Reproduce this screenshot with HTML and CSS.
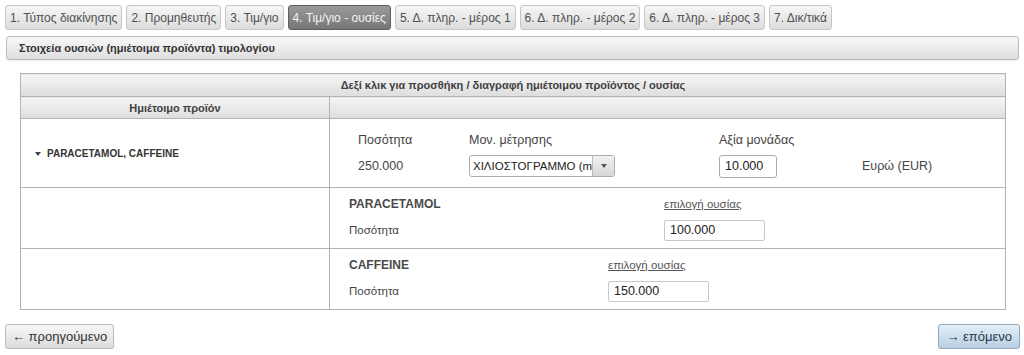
FILE: index.html
```html
<!DOCTYPE html>
<html lang="el">
<head>
<meta charset="utf-8">
<title>Τιμ/γιο - ουσίες</title>
<link rel="stylesheet" href="styles.css">
</head>
<body>
<div class="page">
  <nav class="tabs">
    <span class="tab">1. Τύπος διακίνησης</span>
    <span class="tab">2. Προμηθευτής</span>
    <span class="tab">3. Τιμ/γιο</span>
    <span class="tab active">4. Τιμ/γιο - ουσίες</span>
    <span class="tab">5. Δ. πληρ. - μέρος 1</span>
    <span class="tab">6. Δ. πληρ. - μέρος 2</span>
    <span class="tab">6. Δ. πληρ. - μέρος 3</span>
    <span class="tab">7. Δικ/τικά</span>
  </nav>
  <div class="section-bar">Στοιχεία ουσιών (ημιέτοιμα προϊόντα) τιμολογίου</div>

  <div class="table-wrap">
    <table class="grid">
      <thead>
        <tr class="head1"><th colspan="2">Δεξί κλικ για προσθήκη / διαγραφή ημιέτοιμου προϊόντος / ουσίας</th></tr>
        <tr class="head2"><th class="col-left">Ημιέτοιμο προϊόν</th><th></th></tr>
      </thead>
      <tbody>
        <tr class="row-product">
          <td class="product-name"><span class="caret"></span>PARACETAMOL, CAFFEINE</td>
          <td>
            <div class="product-form">
              <span class="lbl">Ποσότητα</span>
              <span class="lbl">Μον. μέτρησης</span>
              <span class="lbl">Αξία μονάδας</span>
              <span></span>
              <span class="val">250.000</span>
              <div class="select"><span class="select-text">ΧΙΛΙΟΣΤΟΓΡΑΜΜΟ (mg)</span><span class="select-btn"><span class="tri"></span></span></div>
              <div><span class="input small">10.000</span></div>
              <span class="val">Ευρώ (EUR)</span>
            </div>
          </td>
        </tr>
        <tr class="row-sub">
          <td></td>
          <td>
            <div class="sub-form sub-a">
              <span class="sub-name">PARACETAMOL</span>
              <a class="link" href="#">επιλογή ουσίας</a>
              <span class="sub-lbl">Ποσότητα</span>
              <span class="input">100.000</span>
            </div>
          </td>
        </tr>
        <tr class="row-sub">
          <td></td>
          <td>
            <div class="sub-form sub-b">
              <span class="sub-name">CAFFEINE</span>
              <a class="link" href="#">επιλογή ουσίας</a>
              <span class="sub-lbl">Ποσότητα</span>
              <span class="input">150.000</span>
            </div>
          </td>
        </tr>
      </tbody>
    </table>
  </div>

  <div class="footer">
    <span class="btn">← προηγούμενο</span>
    <span class="btn primary">→ επόμενο</span>
  </div>
</div>
</body>
</html>
```

FILE: styles.css
```css
* { box-sizing: border-box; }
html, body { margin: 0; padding: 0; background: #fff; }
body {
  font-family: "Liberation Sans", Arial, sans-serif;
  font-size: 12px;
  color: #333;
}
.page { padding: 5px 5px 0 5px; width: 1024px; }

.tabs { display: flex; gap: 4px; height: 25px; }
.tab {
  display: flex; align-items: center;
  height: 25px; padding: 0 4px;
  border: 1px solid #c6c6c6; border-radius: 3px;
  background: linear-gradient(#f6f6f6, #dcdcdc);
  color: #505050; font-size: 12px; white-space: nowrap;
}
.tab.active {
  background: linear-gradient(#9a9a9a, #777);
  border-color: #5f5f5f;
  color: #f4f4f4;
}

.section-bar {
  margin-top: 6px; margin-left: 1px;
  width: 1013px; height: 24px;
  border: 1px solid #bdbdbd; border-radius: 3px;
  background: linear-gradient(#f8f8f8, #dedede);
  box-shadow: 0 1px 1px rgba(0,0,0,0.08);
  display: flex; align-items: center; padding-left: 12px;
  font-weight: bold; font-size: 11px; color: #333;
}

.table-wrap { margin: 13px 0 0 15px; width: 986px; }
.grid { width: 100%; border-collapse: collapse; border: 1px solid #b3b3b3; }
.grid th {
  background: linear-gradient(#f5f5f5, #dedede);
  font-size: 11px; font-weight: bold; color: #404040;
  border: 1px solid #b3b3b3; padding: 0;
}
.head1 th { height: 23px; }
.head2 th { height: 22px; }
.col-left { width: 309px; }
.grid td { border: 1px solid #b3b3b3; padding: 0; vertical-align: middle; }

.row-product td { height: 69px; }
.product-name { padding-left: 14px !important; font-size: 10px; font-weight: bold; color: #333; }
.caret {
  display: inline-block; width: 0; height: 0; margin-right: 6px; vertical-align: 1px;
  border-left: 3.5px solid transparent; border-right: 3.5px solid transparent; border-top: 4px solid #444;
}
.product-form {
  display: grid;
  grid-template-columns: 111px 250px 143px auto;
  grid-template-rows: 23px 24px;
  row-gap: 3px;
  padding-left: 28px;
  align-items: center;
  font-size: 13px; color: #444;
}
.lbl, .val { font-size: 12.5px; color: #444; }

.select {
  display: flex; width: 146px; height: 22px;
  border: 1px solid #aaa; border-radius: 3px; overflow: hidden;
  background: #fff;
}
.select-text {
  flex: 1; overflow: hidden; white-space: nowrap;
  font-size: 11.5px; color: #222; padding: 4px 0 0 3px;
}
.select-btn {
  width: 22px; border-left: 1px solid #bbb;
  background: linear-gradient(#f2f2f2, #d6d6d6);
  display: flex; align-items: center; justify-content: center;
}
.tri {
  width: 0; height: 0;
  border-left: 3.5px solid transparent; border-right: 3.5px solid transparent; border-top: 4px solid #555;
}

.input {
  display: inline-flex; align-items: center;
  height: 21px; width: 101px; padding-left: 5px;
  border: 1px solid #c8c8c8; border-radius: 2px;
  font-size: 12.5px; color: #222; background: #fff;
}
.input.small { width: 58px; height: 23px; border-color: #aaa; border-radius: 3px; }

.row-sub td { height: 61px; }
.sub-form {
  display: grid;
  grid-template-rows: 22px 26px;
  row-gap: 2px;
  padding-left: 19px;
  align-items: center;
}
.sub-a { grid-template-columns: 315px auto; }
.sub-b { grid-template-columns: 259px auto; }
.sub-name { font-size: 12px; font-weight: bold; color: #4a4a4a; }
.sub-lbl { font-size: 11.5px; color: #444; }
.link { font-size: 11.5px; color: #555; text-decoration: underline; }

.footer { display: flex; justify-content: space-between; margin-top: 14px; width: 1015px; }
.btn {
  display: inline-flex; align-items: center; justify-content: center;
  height: 25px; padding: 0 6px;
  border: 1px solid #bcbcbc; border-radius: 3px;
  background: linear-gradient(#f7f7f7, #dcdcdc);
  box-shadow: 0 1px 1px rgba(0,0,0,0.12);
  font-size: 13px; color: #333; white-space: nowrap;
}
.btn.primary {
  padding: 0 7px;
  background: linear-gradient(#e3eef7, #b8cfe2);
  border-color: #94a9bc;
  color: #2b3a48;
}
```
